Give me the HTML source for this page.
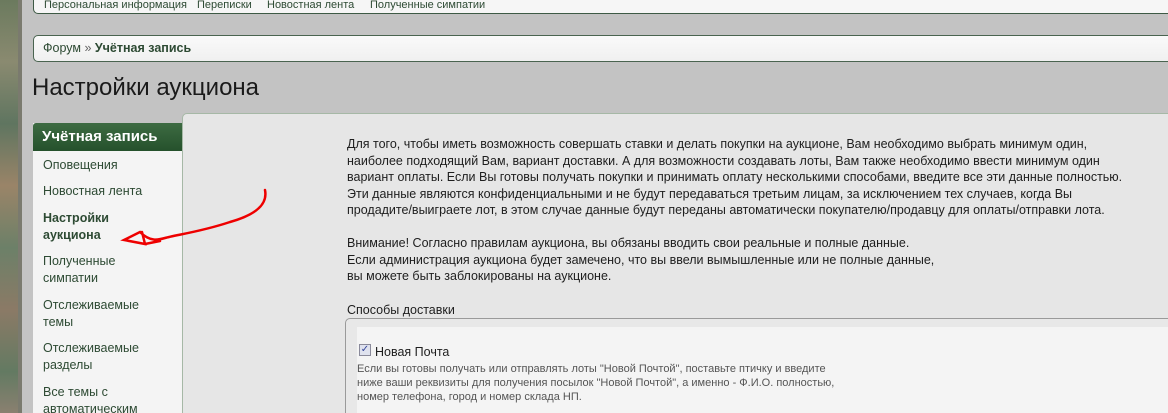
<!DOCTYPE html>
<html><head><meta charset="utf-8"><style>
*{margin:0;padding:0;box-sizing:border-box}
html,body{width:1168px;height:413px;overflow:hidden}
body{background:#c3c3c3;font-family:"Liberation Sans","DejaVu Sans",sans-serif;position:relative}
.camo{position:absolute;left:0;top:0;width:18px;height:413px;background:linear-gradient(180deg,#6b7a5e 0,#8a8a70 15%,#5f7560 30%,#9a8468 45%,#6c8068 60%,#8b7a66 75%,#637a62 90%,#8a8070 100%)}
.strip{position:absolute;left:18px;top:0;width:4px;height:413px;background:#7a7a6e}
.nav{position:absolute;left:33px;top:-10px;width:1140px;height:24px;background:#f6f6f6;border:1px solid #3e5a45;border-radius:5px;font-size:11px;color:#2d4a33}
.nav span{position:absolute;top:8px}
.bc{position:absolute;left:33px;top:35px;width:1140px;height:27px;background:linear-gradient(#fafafa,#f0f0f0);border:1px solid #4a6450;border-radius:5px;font-size:12.5px;color:#2d4a33;padding:5px 0 0 9px}
h1{position:absolute;left:32px;top:74px;font-size:24px;font-weight:normal;color:#1a1a1a}
.side{position:absolute;left:33px;top:123px;width:150px;height:300px;background:#f4f4f4}
.sh{height:28px;background:linear-gradient(#3d6b42,#25512c);color:#fff;font-weight:bold;font-size:15px;padding:5px 0 0 9px;border-radius:3px 0 0 0}
.side a{display:block;position:absolute;left:10px;font-size:12.5px;color:#2d4a33;line-height:17px;text-decoration:none}
.main{position:absolute;left:182px;top:113px;width:990px;height:310px;background:#e6e6e6;border:1px solid #a6b8a6;border-radius:5px 0 0 0}
.t{position:absolute;left:347px;font-size:12.5px;color:#1e1e1e;line-height:16.6px;white-space:nowrap}
.box{position:absolute;left:345px;top:318px;width:830px;height:100px;border:1px solid #9a9a9a;border-radius:5px 0 0 0;background:#e8e8e8}
.inner{position:absolute;left:357px;top:327px;width:820px;height:90px;background:#f4f4f4}
.cb{position:absolute;left:359px;top:344px;width:12px;height:12px;border:1px solid #8a8a9a;background:#dfe2ee;font-size:10px;color:#33459a;line-height:10px;text-align:center}
.small{position:absolute;left:357px;top:362px;font-size:11px;color:#555;line-height:14px;white-space:nowrap}
</style></head><body>
<div class="camo"></div><div class="strip"></div>
<div class="nav"><span style="left:10px">Персональная информация</span><span style="left:163px">Переписки</span><span style="left:233px">Новостная лента</span><span style="left:336px">Полученные симпатии</span></div>
<div class="bc">Форум <span style="color:#666">»</span> <b>Учётная запись</b></div>
<h1>Настройки аукциона</h1>
<div class="side"><div class="sh">Учётная запись</div>
<a style="top:34px">Оповещения</a>
<a style="top:60px">Новостная лента</a>
<a style="top:87px;font-weight:bold">Настройки<br>аукциона</a>
<a style="top:130px">Полученные<br>симпатии</a>
<a style="top:174px">Отслеживаемые<br>темы</a>
<a style="top:217px">Отслеживаемые<br>разделы</a>
<a style="top:261px">Все темы с<br>автоматическим</a>
</div>
<div class="main"></div>
<div class="t" style="top:136px">Для того, чтобы иметь возможность совершать ставки и делать покупки на аукционе, Вам необходимо выбрать минимум один,<br>наиболее подходящий Вам, вариант доставки. А для возможности создавать лоты, Вам также необходимо ввести минимум один<br>вариант оплаты. Если Вы готовы получать покупки и принимать оплату несколькими способами, введите все эти данные полностью.<br>Эти данные являются конфиденциальными и не будут передаваться третьим лицам, за исключением тех случаев, когда Вы<br>продадите/выиграете лот, в этом случае данные будут переданы автоматически покупателю/продавцу для оплаты/отправки лота.</div>
<div class="t" style="top:235px">Внимание! Согласно правилам аукциона, вы обязаны вводить свои реальные и полные данные.<br>Если администрация аукциона будет замечено, что вы ввели вымышленные или не полные данные,<br>вы можете быть заблокированы на аукционе.</div>
<div class="t" style="top:302px">Способы доставки</div>
<div class="box"></div><div class="inner"></div>
<div class="cb">✓</div>
<div class="t" style="left:375px;top:344px">Новая Почта</div>
<div class="small">Если вы готовы получать или отправлять лоты "Новой Почтой", поставьте птичку и введите<br>ниже ваши реквизиты для получения посылок "Новой Почтой", а именно - Ф.И.О. полностью,<br>номер телефона, город и номер склада НП.</div>
<svg style="position:absolute;left:0;top:0" width="400" height="413"><path d="M265 190 C 268 205,255 215,230 222 C 200 232,175 235,165 238 C 158 240,150 242,140 232 L 124 240 L 145 244 L 142 232 M 145 244 L 160 241" fill="none" stroke="#e00" stroke-width="2.5" stroke-linecap="round"/></svg>
</body></html>
